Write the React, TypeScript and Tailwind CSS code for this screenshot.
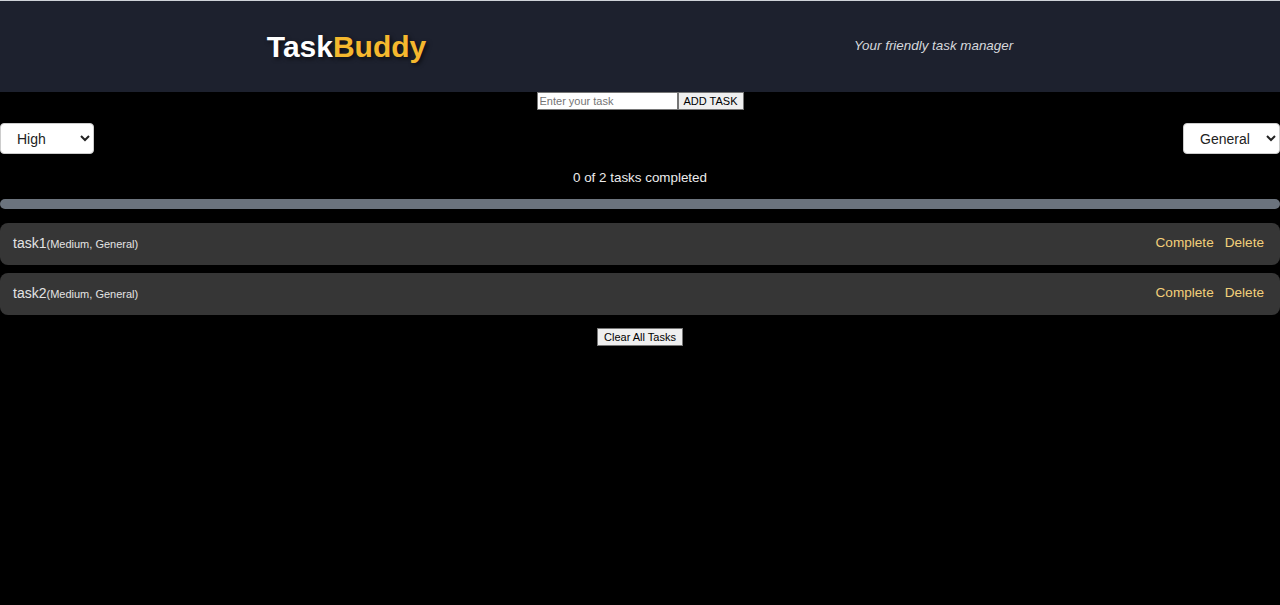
import React from "react";

const tasks = [
  { name: "task1", priority: "Medium", category: "General" },
  { name: "task2", priority: "Medium", category: "General" },
];

export default function App() {
  return (
    <div
      className="min-h-[605px] w-full bg-black text-white"
      style={{ fontFamily: '"Liberation Sans", Arial, sans-serif' }}
    >
      <header className="flex h-[92px] items-center justify-around border-t border-[#cfd3d8] bg-[#1d212e] px-[53px]">
        <h1 className="text-[30px] font-bold leading-none [text-shadow:2px_2px_4px_rgba(0,0,0,0.6)]">
          <span className="text-white">Task</span>
          <span className="text-[#f5b82e]">Buddy</span>
        </h1>
        <p className="text-[13.4px] italic text-[#d6d8dc]">Your friendly task manager</p>
      </header>

      <div className="flex justify-center">
        <input
          placeholder="Enter your task"
          className="h-[18px] w-[141px] border border-[#767676] bg-white px-[2px] text-[11px] text-black placeholder:text-[#757575] outline-none"
        />
        <button className="h-[18px] border border-[#767676] bg-[#efefef] px-[5px] text-[11px] leading-none text-black">
          ADD TASK
        </button>
      </div>

      <div className="mt-[13px] flex justify-between">
        <select className="h-[31px] w-[94px] rounded-[4px] border border-[#ccc] bg-white pl-[12px] pr-[4px] text-[14px] text-[#222]">
          <option>High</option>
        </select>
        <select className="h-[31px] w-[97px] rounded-[4px] border border-[#ccc] bg-white pl-[12px] pr-[4px] text-[14px] text-[#222]">
          <option>General</option>
        </select>
      </div>

      <p className="mt-[16px] text-center text-[13.4px] leading-[16px] text-[#ececec]">
        0 of 2 tasks completed
      </p>

      <div className="mt-[13px] h-[10px] w-full rounded-full bg-[#6b737d]" />

      <div className="mt-[14px] flex flex-col gap-[8px]">
        {tasks.map((t) => (
          <div
            key={t.name}
            className="flex h-[42px] items-center justify-between rounded-[8px] bg-[#363636] pl-[13px] pr-[16px]"
          >
            <div className="-mt-[2px] flex items-baseline text-[#e4e4e4]">
              <span className="text-[14px]">{t.name}</span>
              <span className="text-[11px]">
                ({t.priority}, {t.category})
              </span>
            </div>
            <div className="-mt-[2px] flex gap-[11px] text-[13.6px] text-[#f2cf7a]">
              <button>Complete</button>
              <button>Delete</button>
            </div>
          </div>
        ))}
      </div>

      <div className="mt-[13px] flex justify-center">
        <button className="h-[18px] border border-[#767676] bg-[#efefef] px-[6px] text-[11px] leading-none text-black">
          Clear All Tasks
        </button>
      </div>
    </div>
  );
}
